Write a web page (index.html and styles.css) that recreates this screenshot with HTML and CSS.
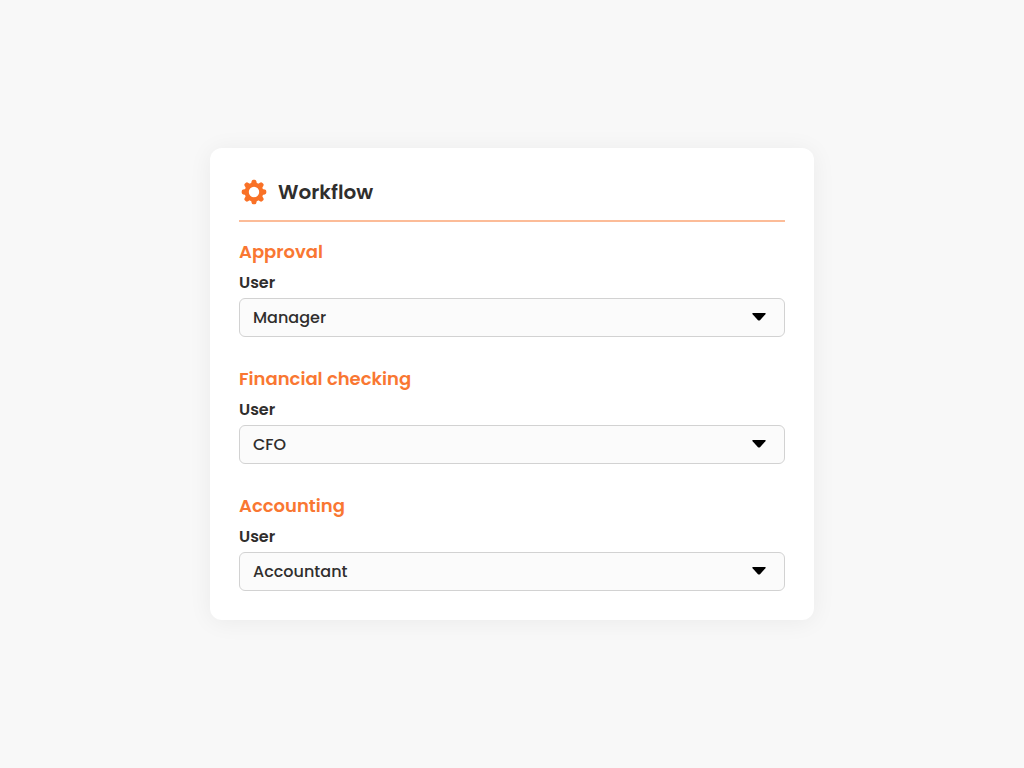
FILE: index.html
```html
<!DOCTYPE html>
<html lang="en">
<head>
<meta charset="utf-8">
<meta name="viewport" content="width=device-width, initial-scale=1">
<title>Workflow</title>
<link rel="stylesheet" href="styles.css">
</head>
<body>
<main class="page">
  <form class="card">
    <header class="card-header">
      <svg class="gear" viewBox="0 0 26 26" aria-hidden="true">
        <g fill="#f97126">
          <g id="teeth">
            <path id="tooth" d="M9.8 6 L10.6 2.2 Q10.9 .7 12.2 .7 H13.8 Q15.1 .7 15.4 2.2 L16.2 6Z"/>
            <use href="#tooth" transform="rotate(45 13 13)"/>
            <use href="#tooth" transform="rotate(90 13 13)"/>
            <use href="#tooth" transform="rotate(135 13 13)"/>
          </g>
          <use href="#teeth" transform="rotate(180 13 13)"/>
        </g>
        <circle cx="13" cy="13" r="7.3" fill="none" stroke="#f97126" stroke-width="4.2"/>
      </svg>
      <h1 class="title">Workflow</h1>
    </header>
    <section class="step">
      <h2 class="step-title">Approval</h2>
      <label class="label" for="approval">User</label>
      <div class="field">
        <select class="select" id="approval"><option>Manager</option></select>
        <svg class="arrow" viewBox="0 0 14 8" aria-hidden="true"><path d="M.9 0H13.1Q14.2.2 13.4 1.2L8 7.2Q7 8 6 7.2L.6 1.2Q-.2.2.9 0Z"/></svg>
      </div>
    </section>
    <section class="step">
      <h2 class="step-title">Financial checking</h2>
      <label class="label" for="financial">User</label>
      <div class="field">
        <select class="select" id="financial"><option>CFO</option></select>
        <svg class="arrow" viewBox="0 0 14 8" aria-hidden="true"><path d="M.9 0H13.1Q14.2.2 13.4 1.2L8 7.2Q7 8 6 7.2L.6 1.2Q-.2.2.9 0Z"/></svg>
      </div>
    </section>
    <section class="step">
      <h2 class="step-title">Accounting</h2>
      <label class="label" for="accounting">User</label>
      <div class="field">
        <select class="select" id="accounting"><option>Accountant</option></select>
        <svg class="arrow" viewBox="0 0 14 8" aria-hidden="true"><path d="M.9 0H13.1Q14.2.2 13.4 1.2L8 7.2Q7 8 6 7.2L.6 1.2Q-.2.2.9 0Z"/></svg>
      </div>
    </section>
  </form>
</main>
</body>
</html>
```
FILE: styles.css
```css
* {
  box-sizing: border-box;
}

body {
  margin: 0;
  background: #f8f8f8;
  color: #302e2d;
  font-family: Poppins, Inter, "Open Sans", sans-serif;
}

.page {
  display: flex;
  align-items: center;
  justify-content: center;
  min-height: 100vh;
  padding: 16px;
}

.card {
  width: 100%;
  max-width: 604px;
  padding: 28px 29px 29px;
  border-radius: 12px;
  background: #fff;
  box-shadow: 0 2px 24px rgba(0, 0, 0, 0.06);
}

.card-header {
  display: flex;
  align-items: center;
  gap: 11px;
  padding: 0 2px 12px;
  border-bottom: 2px solid #fcbc98;
}

.gear {
  flex: none;
  width: 26px;
  height: 26px;
}

.title {
  margin: 0;
  font-size: 20px;
  font-weight: 600;
  line-height: 32px;
}

.step {
  margin-top: 16px;
}

.step + .step {
  margin-top: 28px;
}

.step-title {
  margin: 0 0 5px;
  color: #f97732;
  font-size: 18px;
  font-weight: 600;
  line-height: 28px;
}

.label {
  display: block;
  margin-bottom: 3px;
  font-size: 16px;
  font-weight: 600;
  line-height: 24px;
}

.field {
  position: relative;
}

.select {
  display: block;
  width: 100%;
  height: 39px;
  padding: 0 40px 0 13px;
  border: 1px solid #d2d2d2;
  border-radius: 6px;
  background: #fbfbfb;
  color: inherit;
  font-family: inherit;
  font-size: 16px;
  font-weight: 500;
  appearance: none;
}

.arrow {
  position: absolute;
  top: 15px;
  right: 19px;
  width: 14px;
  height: 8px;
  pointer-events: none;
}
```
